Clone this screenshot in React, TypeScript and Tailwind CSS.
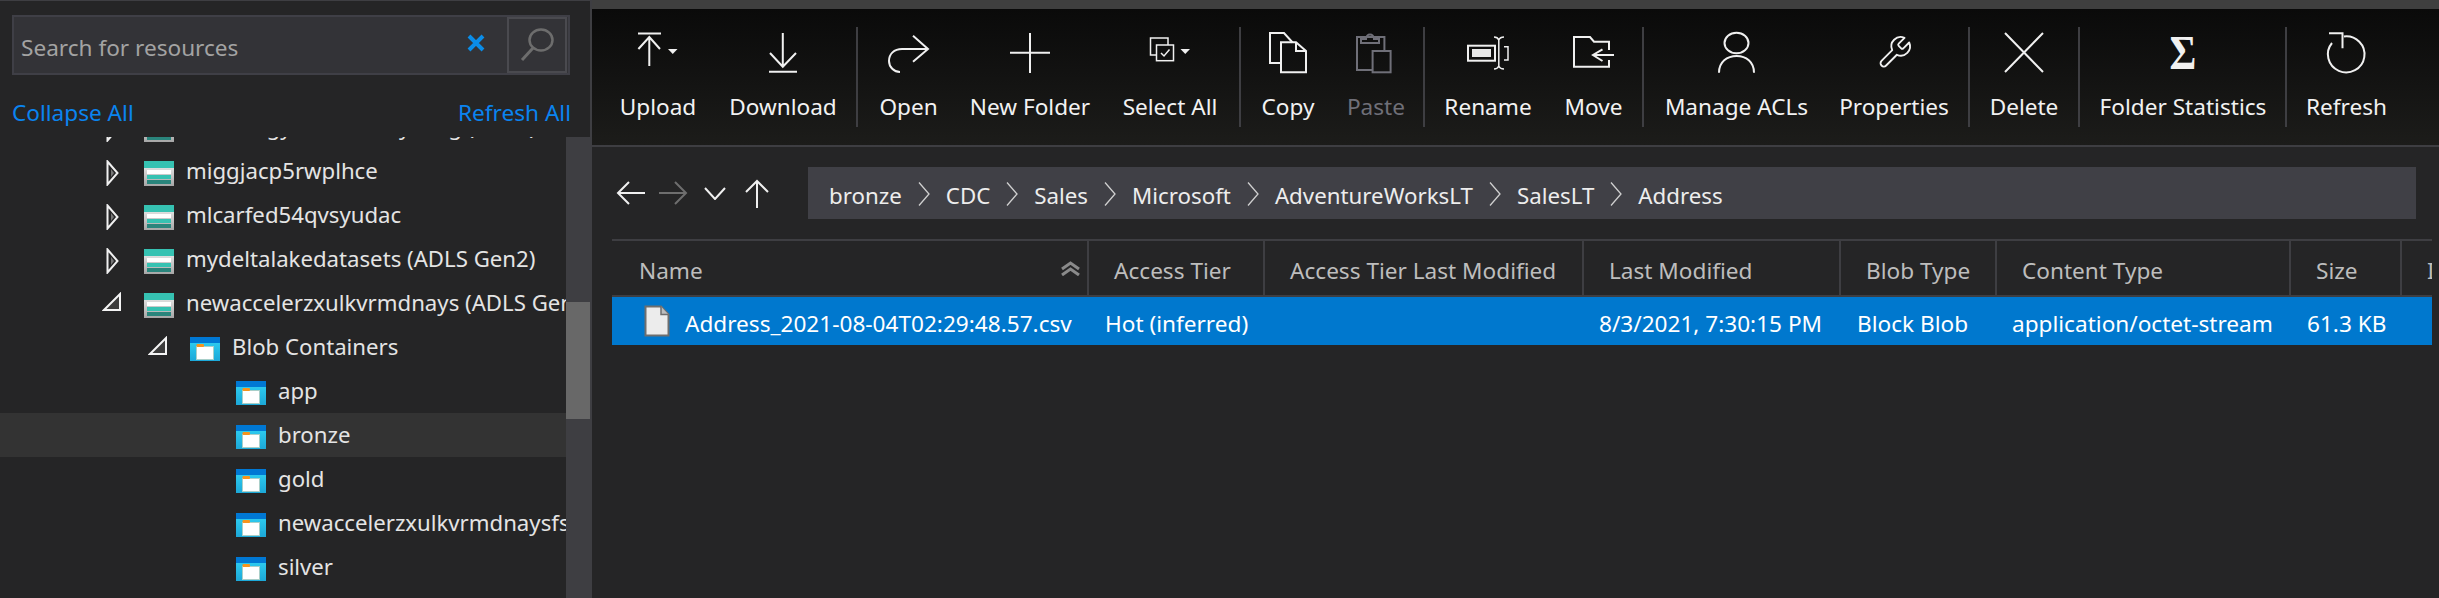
import React from "react";

const font = { fontFamily: '"Noto Sans", sans-serif' };

function Caret({ x }: { x: number }) {
    return <path d={`M${x} 19 h9.5 l-4.75 5 z`} fill="#f0f0f0" stroke="none" />;
}

const icons: Record<string, React.ReactNode> = {
    upload: (
        <>
            <path d="M20 3.5 H43 M31.3 7 V36 M20.4 19 L31.3 7 L42 19" />
            <Caret x={50} />
        </>
    ),
    download: <path d="M39.8 3 V36 M27 23 L39.8 36.7 L53 23 M26 41.7 H54" />,
    open: <path d="M59 19 H33 C25 19 20 24 20 31 C20 37 25 42 31 42 M44 5.7 L59 19 L44 31.7" />,
    folder: <path d="M20 22.7 H60 M40 3 V43" />,
    select: (
        <>
            <path d="M26 25 H20.5 V8 H38 V15" strokeWidth="1.5" />
            <rect x="26.5" y="15" width="17" height="15.7" strokeWidth="1.5" />
            <path d="M31 23 L34 26 L39.5 19.5" strokeWidth="1.5" />
            <Caret x={50.5} />
        </>
    ),
    copy: (
        <>
            <path d="M33 33 H22 V3 H36 L44.6 12.5" />
            <path d="M33 12.3 H48 L58 21 V42.3 H33 Z M48 12.3 V21 H58" />
        </>
    ),
    paste: (
        <g stroke="#6f6f78">
            <path d="M36.6 40 H21 V7 H48.4 V21" />
            <path d="M25 13 V9 H30 C30 3 38 3 38 9 H43 V13 Z" />
            <rect x="36.6" y="21" width="18" height="21.3" />
        </g>
    ),
    rename: (
        <>
            <rect x="20" y="15.7" width="27" height="15" />
            <rect x="24" y="19" width="19" height="8" fill="#e8e8e8" stroke="none" />
            <path d="M50.8 10 V36 M46 7 C48 7 50 8 50.8 10 C51.6 8 53 7 56 7 M46 39 C48 39 50 38 50.8 36 C51.6 38 53 39 56 39 M56 16.7 H60 V30 H56" strokeWidth="1.5" />
        </>
    ),
    move: <path d="M55 20 V11.7 H40 L36 7 H20 V36.7 H55 V30 M60 25 H39 M48.5 19.3 L39 25 L48.5 31" />,
    acl: (
        <>
            <ellipse cx="39.5" cy="13" rx="12" ry="10.3" />
            <path d="M22 42.7 C22 32 30 26 39.7 26 C49 26 57 32 57 42.7" />
        </>
    ),
    properties: (
        <g transform="translate(21.9 3.9) scale(1.55)" strokeWidth="1.2" strokeLinejoin="round">
            <path d="M14.7 6.3a1 1 0 0 0 0 1.4l1.6 1.6a1 1 0 0 0 1.4 0l3.77-3.77a6 6 0 0 1-7.94 7.94l-6.91 6.91a2.12 2.12 0 0 1-3-3l6.91-6.91a6 6 0 0 1 7.94-7.94l-3.76 3.76z" />
        </g>
    ),
    delete: <path d="M21 3 L59 42 M59 3 L21 42" />,
    sigma: (
        <text transform="translate(40 39) scale(1 1.2)" textAnchor="middle" fontFamily='"Liberation Serif", serif' fontWeight="bold" fontSize="41" fill="#f0f0f0" stroke="none">
            Σ
        </text>
    ),
    refresh: <path d="M22 3.3 H35.5 V18.3 M37 6.5 A18.3 18 0 1 1 25 13" />,
};

const toolbar = [
    { label: "Upload", icon: "upload", w: "w-[110px]" },
    { label: "Download", icon: "download", w: "w-[140px]" },
    { sep: "ml-[3px] mr-[3px]" },
    { label: "Open", icon: "open", w: "w-[95px]" },
    { label: "New Folder", icon: "folder", w: "w-[148px]" },
    { label: "Select All", icon: "select", w: "w-[132px]" },
    { sep: "ml-[3px] mr-[3px]" },
    { label: "Copy", icon: "copy", w: "w-[88px]" },
    { label: "Paste", icon: "paste", w: "w-[88px]", disabled: true },
    { sep: "ml-[3px] mr-[3px]" },
    { label: "Rename", icon: "rename", w: "w-[120px]" },
    { label: "Move", icon: "move", w: "w-[91px]" },
    { sep: "ml-[3px] mr-[3px]" },
    { label: "Manage ACLs", icon: "acl", w: "w-[179px]" },
    { label: "Properties", icon: "properties", w: "w-[136px]" },
    { sep: "ml-[6px] mr-[3px]" },
    { label: "Delete", icon: "delete", w: "w-[102px]" },
    { sep: "ml-[3px] mr-[3px]" },
    { label: "Folder Statistics", icon: "sigma", w: "w-[200px]" },
    { sep: "ml-[2px] mr-[3px]" },
    { label: "Refresh", icon: "refresh", w: "w-[113px]" },
];

function StorageIcon() {
    return (
        <svg width="30" height="25" viewBox="0 0 30 25" className="shrink-0">
            <defs>
                <linearGradient id="sg" x1="0" y1="0" x2="0" y2="1">
                    <stop offset="0" stopColor="#f4f4f4" />
                    <stop offset="1" stopColor="#a6a6a6" />
                </linearGradient>
            </defs>
            <rect width="30" height="25" fill="url(#sg)" />
            <rect width="30" height="7" fill="#36c2b2" />
            <rect x="3" y="9" width="24" height="4" fill="#ffffff" />
            <rect x="3" y="14" width="24" height="4" fill="#36c2b2" />
            <rect x="3" y="19" width="24" height="4" fill="#2a857c" />
        </svg>
    );
}

function ContainerIcon() {
    return (
        <svg width="30" height="24" viewBox="0 0 30 24" className="shrink-0">
            <defs>
                <linearGradient id="cg" x1="0" y1="0" x2="0" y2="1">
                    <stop offset="0" stopColor="#32d4f5" />
                    <stop offset="1" stopColor="#1ca8d8" />
                </linearGradient>
            </defs>
            <rect width="30" height="24" fill="url(#cg)" />
            <rect width="30" height="6" fill="#0078d4" />
            <rect x="6.5" y="9.5" width="17" height="13" fill="#ffffff" stroke="#a9cfc9" />
            <rect x="6.5" y="7" width="7.5" height="3" rx="1" fill="#f7941d" />
        </svg>
    );
}

function TreeRow({ label, pl, arrow, kind, active }: { label: string; pl: string; arrow?: "open" | "closed"; kind: "storage" | "container"; active?: boolean }) {
    return (
        <div className={`h-[44px] flex items-center shrink-0 whitespace-nowrap ${pl} ${active ? "bg-[#333333]" : ""}`}>
            <div className={`h-[26px] mt-[4px] shrink-0 ${arrow === "open" ? "w-[42px]" : "w-[38px]"}`}>
                {arrow === "closed" && (
                    <svg width="14" height="26" viewBox="0 0 14 26">
                        <path d="M1.5 1.5 L11.5 13 L1.5 24.5 Z" fill="#252526" stroke="#f0f0f0" strokeWidth="2" />
                        <path d="M5 9 L8 13 L5 17 Z" fill="#777" />
                    </svg>
                )}
                {arrow === "open" && (
                    <svg width="20" height="20" viewBox="0 0 20 20">
                        <path d="M18 2 V18 H2 Z" fill="#3c3c3c" stroke="#f4f4f4" strokeWidth="2" />
                    </svg>
                )}
            </div>
            <div className="mt-[4px]">{kind === "storage" ? <StorageIcon /> : <ContainerIcon />}</div>
            <span className="ml-[12px] text-[22.2px] text-[#e4e4e4]">{label}</span>
        </div>
    );
}

function Chevron() {
    return (
        <svg width="12" height="24" viewBox="0 0 12 24" className="shrink-0 mt-[2px]">
            <path d="M1 0.5 L11 12 L1 23.5" fill="none" stroke="#d0d0d0" strokeWidth="1.3" />
        </svg>
    );
}

const crumbs = ["bronze", "CDC", "Sales", "Microsoft", "AdventureWorksLT", "SalesLT", "Address"];

const headers = ["Name", "Access Tier", "Access Tier Last Modified", "Last Modified", "Blob Type", "Content Type", "Size", "Index"];
const cols = "grid grid-cols-[475px_176px_319px_257px_156px_294px_111px_32px]";

export default function App() {
    return (
        <div className="w-[2439px] h-[598px] flex overflow-hidden bg-[#252526] text-white" style={font}>
            {/* arbol de recursos */}
            <aside className="w-[592px] h-full flex flex-col border-r-2 border-[#3e3e42] border-t border-t-[#3e3e42] shrink-0">
                <div className="h-[136px] shrink-0 px-[12px] pt-[14px]">
                    <div className="h-[60px] w-[558px] flex items-center bg-[#333337] border-2 border-[#3f3f46]">
                        <span className="flex-1 pl-[7px] mt-[5px] text-[22.6px] text-[#a3a3a3]">Search for resources</span>
                        <svg width="18" height="18" viewBox="0 0 18 18" className="mr-[22px] mb-[4px]">
                            <path d="M2 2 L16 16 M16 2 L2 16" stroke="#0a8de8" strokeWidth="4" />
                        </svg>
                        <div className="w-[60px] h-[56px] flex items-center justify-center border-2 border-[#4a4a4f] mr-[1px]">
                            <svg width="36" height="36" viewBox="0 0 36 36">
                                <ellipse cx="22" cy="13" rx="11.5" ry="10.5" fill="none" stroke="#6d6d6d" strokeWidth="2.5" />
                                <path d="M14 21 L3 33" stroke="#6d6d6d" strokeWidth="3" />
                            </svg>
                        </div>
                    </div>
                    <div className="flex justify-between mt-[21px] w-[559px] text-[22.6px] text-[#0a84f0]">
                        <span>Collapse All</span>
                        <span>Refresh All</span>
                    </div>
                </div>
                <div className="flex flex-1 min-h-0">
                    <div className="flex-1 min-w-0 overflow-hidden">
                        <div className="-mt-[32px] flex flex-col">
                            <TreeRow label="mdelwzgyrnmwnrsoyzhng (Gen1)" pl="pl-[106px]" arrow="closed" kind="storage" />
                            <TreeRow label="miggjacp5rwplhce" pl="pl-[106px]" arrow="closed" kind="storage" />
                            <TreeRow label="mlcarfed54qvsyudac" pl="pl-[106px]" arrow="closed" kind="storage" />
                            <TreeRow label="mydeltalakedatasets (ADLS Gen2)" pl="pl-[106px]" arrow="closed" kind="storage" />
                            <TreeRow label="newaccelerzxulkvrmdnays (ADLS Gen2)" pl="pl-[102px]" arrow="open" kind="storage" />
                            <TreeRow label="Blob Containers" pl="pl-[148px]" arrow="open" kind="container" />
                            <TreeRow label="app" pl="pl-[198px]" kind="container" />
                            <TreeRow label="bronze" pl="pl-[198px]" kind="container" active />
                            <TreeRow label="gold" pl="pl-[198px]" kind="container" />
                            <TreeRow label="newaccelerzxulkvrmdnaysfs" pl="pl-[198px]" kind="container" />
                            <TreeRow label="silver" pl="pl-[198px]" kind="container" />
                        </div>
                    </div>
                    <div className="w-[24px] bg-[#3e3e42] shrink-0 pt-[165px]">
                        <div className="h-[117px] bg-[#686868]" />
                    </div>
                </div>
            </aside>

            <main className="flex-1 min-w-0 flex flex-col">
                <div className="h-[9px] bg-[#3f3f3f] shrink-0" />
                {/* barra de comandos */}
                <div className="h-[138px] shrink-0 flex pl-[11px] pt-[18px] bg-gradient-to-b from-[#0a0a0a] to-[#1c1c1a] border-b-2 border-[#3e3e42]">
                    {toolbar.map((t, i) =>
                        t.sep ? (
                            <div key={i} className={`w-[2px] h-[100px] bg-[#3e3e42] shrink-0 ${t.sep}`} />
                        ) : (
                            <div key={i} className={`${t.w} shrink-0 flex flex-col items-center`}>
                                <svg width="80" height="46" viewBox="0 0 80 46" className="mt-[3px]" fill="none" stroke="#f0f0f0" strokeWidth="2">
                                    {icons[t.icon as string]}
                                </svg>
                                <span className={`mt-[16px] text-[22.6px] leading-[30px] whitespace-nowrap ${t.disabled ? "text-[#6f6f78]" : "text-[#f2f2f2]"}`}>{t.label}</span>
                            </div>
                        ),
                    )}
                </div>

                {/* navegacion */}
                <div className="h-[92px] shrink-0 flex pl-[24px] pr-[23px] pt-[20px]">
                    <div className="flex items-center h-[52px] w-[192px] shrink-0">
                        <svg width="29" height="24" viewBox="0 0 29 24" fill="none" stroke="#f0f0f0" strokeWidth="2">
                            <path d="M29 12 H2 M13 1 L2 12 L13 23" />
                        </svg>
                        <svg width="29" height="24" viewBox="0 0 29 24" fill="none" stroke="#6e6e6e" strokeWidth="2" className="ml-[14px]">
                            <path d="M0 12 H27 M16 1 L27 12 L16 23" />
                        </svg>
                        <svg width="22" height="13" viewBox="0 0 22 13" fill="none" stroke="#f0f0f0" strokeWidth="2" className="ml-[16px]">
                            <path d="M1 1 L11 12 L21 1" />
                        </svg>
                        <svg width="24" height="29" viewBox="0 0 24 29" fill="none" stroke="#f0f0f0" strokeWidth="2" className="ml-[19px]">
                            <path d="M12 29 V2 M1 13 L12 2 L23 13" />
                        </svg>
                    </div>
                    <div className="flex-1 h-[52px] bg-[#404046] flex items-center gap-[16px] pl-[21px] text-[22.3px] text-[#ededed]">
                        {crumbs.map((c, i) => (
                            <React.Fragment key={c}>
                                {i > 0 && <Chevron />}
                                <span className="mt-[6px]">{c}</span>
                            </React.Fragment>
                        ))}
                    </div>
                </div>

                {/* tabla de blobs */}
                <div className="ml-[20px] w-[1820px] border-t-2 border-[#3e3e42]">
                    <div className={`${cols} h-[56px] border-b-2 border-[#3e3e42] overflow-hidden`}>
                        {headers.map((h, i) => (
                            <div key={h} className={`relative flex items-center overflow-hidden whitespace-nowrap pt-[6px] text-[22.6px] text-[#bdbdbd] ${i === 0 ? "pl-[27px]" : "pl-[25px] border-l-2 border-[#3e3e42]"}`}>
                                {h}
                                {i === 0 && (
                                    <svg width="21" height="15" viewBox="0 0 21 15" className="absolute right-[6px] top-[20px]" fill="none" stroke="#8a8a8a" strokeWidth="3">
                                        <path d="M2 8 L10.5 2 L19 8 M2 14 L10.5 8 L19 14" />
                                    </svg>
                                )}
                            </div>
                        ))}
                    </div>
                    <div className={`${cols} h-[48px] bg-[#0078ce] text-[22.6px] text-white whitespace-nowrap`}>
                        <div className="flex items-center pl-[32px]">
                            <svg width="26" height="32" viewBox="0 0 26 32" className="shrink-0">
                                <path d="M1.5 1.5 H17 L24.5 9.5 V30.5 H1.5 Z" fill="#ececec" stroke="#6e6e6e" strokeWidth="2" />
                                <path d="M17 1.5 V9.5 H24.5" fill="#bdbdbd" stroke="#6e6e6e" strokeWidth="1.5" />
                            </svg>
                            <span className="ml-[15px] mt-[5px]">Address_2021-08-04T02:29:48.57.csv</span>
                        </div>
                        <div className="flex items-center pl-[18px] pt-[5px]">Hot (inferred)</div>
                        <div />
                        <div className="flex items-center pl-[17px] pt-[5px]">8/3/2021, 7:30:15 PM</div>
                        <div className="flex items-center pl-[18px] pt-[5px]">Block Blob</div>
                        <div className="flex items-center pl-[17px] pt-[5px]">application/octet-stream</div>
                        <div className="flex items-center pl-[18px] pt-[5px]">61.3 KB</div>
                        <div />
                    </div>
                </div>
            </main>
        </div>
    );
}
